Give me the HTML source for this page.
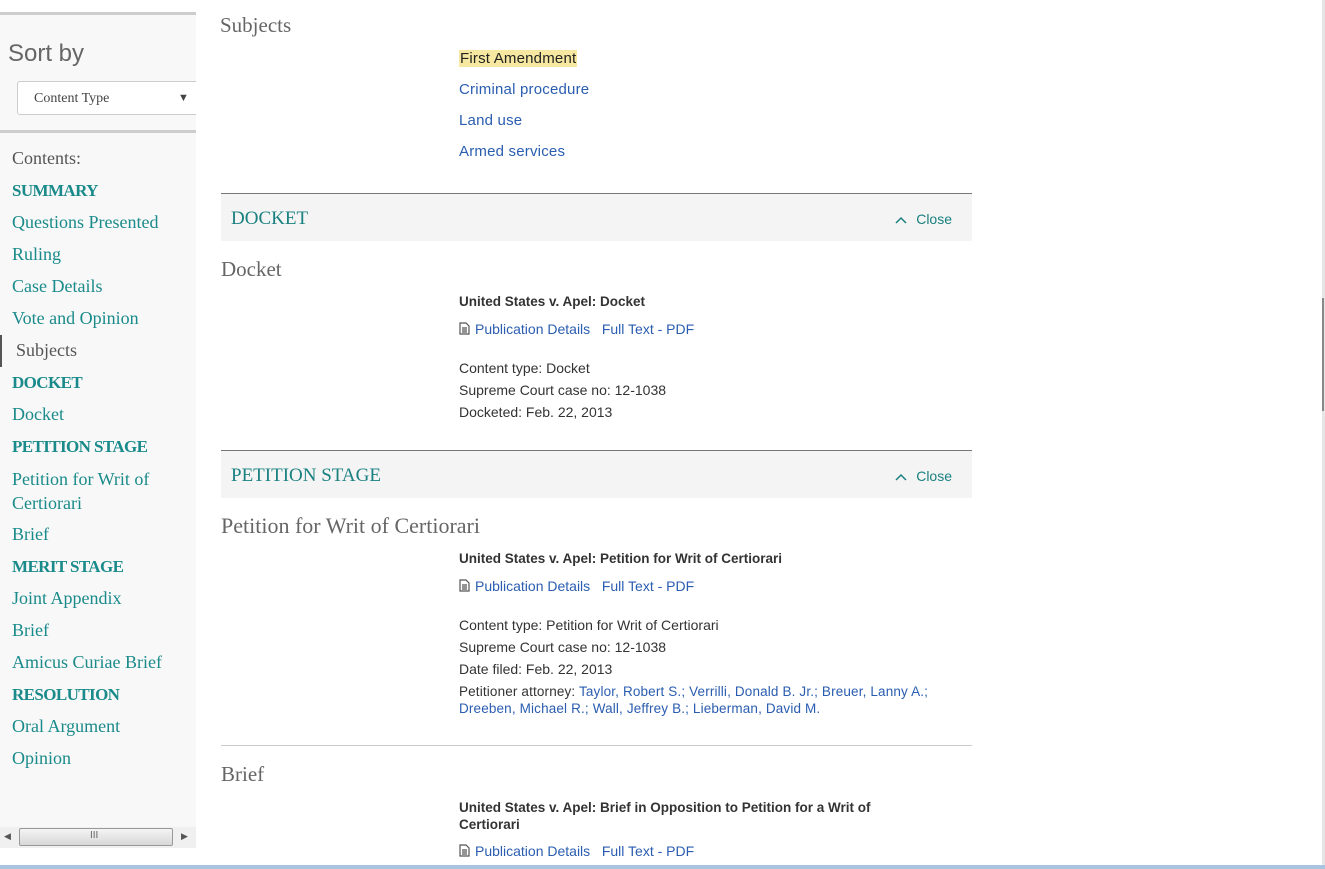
<!DOCTYPE html>
<html><head><meta charset="utf-8">
<style>
*{margin:0;padding:0;box-sizing:border-box}
body{width:1325px;height:869px;overflow:hidden;background:#fff;position:relative;font-family:"Liberation Sans",sans-serif}
.a{position:absolute;white-space:nowrap}
.serif{font-family:"Liberation Serif",serif}
#side{position:absolute;left:0;top:12px;width:196px;height:836px;background:#f8f8f8;border-top:3px solid #cdcdcd;overflow:hidden}
.nav{position:absolute;left:12px;font-family:"Liberation Serif",serif;font-size:18px;color:#1a8a8a}
.nav.b{font-weight:bold;letter-spacing:-0.6px;font-size:17px}
.h2{font-family:"Liberation Serif",serif;font-size:21px;color:#666}
.sec{position:absolute;left:221px;width:751px;height:48px;background:#f4f4f4;border-top:1px solid #777}
.sec .t{position:absolute;left:10px;top:14px;font-family:"Liberation Serif",serif;font-size:19px;color:#1a8080}
.sec .c{position:absolute;right:20px;top:17px;font-size:14px;color:#1a8080}
.link{color:#2a5db0;font-size:14px}
.sub{color:#2a5db0;font-size:15px;letter-spacing:0.2px}
.txt{font-size:14px;color:#333}
.bold{font-size:13.5px;font-weight:bold;color:#333}
</style></head><body>
<div id="side">
  <div class="a" style="left:8px;top:25px;font-size:24px;color:#666">Sort by</div>
  <div class="a" style="left:17px;top:66px;width:200px;height:34px;background:#fff;border:1px solid #ccc;border-radius:3px"></div>
  <div class="a serif" style="left:34px;top:76px;font-size:14px;color:#444">Content Type</div>
  <div class="a" style="left:178px;top:77px;font-size:11px;color:#444">▼</div>
  <div class="a" style="left:0;top:115px;width:196px;height:3px;background:#cdcdcd"></div>
  <div class="nav" style="top:133px;color:#555">Contents:</div>
  <div class="nav b" style="top:166px">SUMMARY</div>
  <div class="nav" style="top:197px">Questions Presented</div>
  <div class="nav" style="top:229px">Ruling</div>
  <div class="nav" style="top:261px">Case Details</div>
  <div class="nav" style="top:293px">Vote and Opinion</div>
  <div class="a" style="left:0;top:320px;width:2px;height:32px;background:#555"></div>
  <div class="nav" style="top:325px;left:16px;color:#555">Subjects</div>
  <div class="nav b" style="top:358px">DOCKET</div>
  <div class="nav" style="top:389px">Docket</div>
  <div class="nav b" style="top:422px">PETITION STAGE</div>
  <div class="nav" style="top:452px;line-height:24px;white-space:normal;width:170px">Petition for Writ of Certiorari</div>
  <div class="nav" style="top:509px">Brief</div>
  <div class="nav b" style="top:542px">MERIT STAGE</div>
  <div class="nav" style="top:573px">Joint Appendix</div>
  <div class="nav" style="top:605px">Brief</div>
  <div class="nav" style="top:637px">Amicus Curiae Brief</div>
  <div class="nav b" style="top:670px">RESOLUTION</div>
  <div class="nav" style="top:701px">Oral Argument</div>
  <div class="nav" style="top:733px">Opinion</div>
  <div class="a" style="left:0;top:812px;width:196px;height:21px;background:#f0f0f0"></div>
  <div class="a" style="left:4px;top:816px;font-size:9px;color:#555">◀</div>
  <div class="a" style="left:19px;top:813px;width:154px;height:18px;border:1px solid #999;border-radius:2px;background:linear-gradient(#f4f4f4,#d8d8d8)"></div>
  <div class="a" style="left:90px;top:815px;font-size:10px;color:#666">III</div>
  <div class="a" style="left:181px;top:816px;font-size:9px;color:#555">▶</div>
</div>

<div class="a h2" style="left:220px;top:13px">Subjects</div>
<div class="a sub" style="left:459px;top:50px;background:#f6e8a0;color:#222;padding:0 1px">First Amendment</div>
<div class="a sub" style="left:459px;top:81px">Criminal procedure</div>
<div class="a sub" style="left:459px;top:112px">Land use</div>
<div class="a sub" style="left:459px;top:143px">Armed services</div>

<div class="sec" style="top:193px"><div class="t">DOCKET</div><div class="c"><svg width="12" height="8" style="margin-right:9px"><path d="M1 7L6 2L11 7" stroke="#1a8080" stroke-width="1.5" fill="none"/></svg>Close</div></div>
<div class="a h2" style="left:221px;top:257px">Docket</div>
<div class="a bold" style="left:459px;top:294px">United States v. Apel: Docket</div>
<div class="a link" style="left:459px;top:321px"><svg width="11" height="13" style="vertical-align:-1px;margin-right:5px"><path d="M1 1H7L10 4V12H1Z M3 6H8M3 8H8M3 10H8" stroke="#555" stroke-width="1.2" fill="none"/></svg>Publication Details&nbsp;&nbsp;&nbsp;Full Text - PDF</div>
<div class="a txt" style="left:459px;top:360px">Content type: Docket</div>
<div class="a txt" style="left:459px;top:382px">Supreme Court case no: 12-1038</div>
<div class="a txt" style="left:459px;top:404px">Docketed: Feb. 22, 2013</div>

<div class="sec" style="top:450px"><div class="t">PETITION STAGE</div><div class="c"><svg width="12" height="8" style="margin-right:9px"><path d="M1 7L6 2L11 7" stroke="#1a8080" stroke-width="1.5" fill="none"/></svg>Close</div></div>
<div class="a h2" style="left:221px;top:513px;font-size:22px">Petition for Writ of Certiorari</div>
<div class="a bold" style="left:459px;top:551px">United States v. Apel: Petition for Writ of Certiorari</div>
<div class="a link" style="left:459px;top:578px"><svg width="11" height="13" style="vertical-align:-1px;margin-right:5px"><path d="M1 1H7L10 4V12H1Z M3 6H8M3 8H8M3 10H8" stroke="#555" stroke-width="1.2" fill="none"/></svg>Publication Details&nbsp;&nbsp;&nbsp;Full Text - PDF</div>
<div class="a txt" style="left:459px;top:617px">Content type: Petition for Writ of Certiorari</div>
<div class="a txt" style="left:459px;top:639px">Supreme Court case no: 12-1038</div>
<div class="a txt" style="left:459px;top:661px">Date filed: Feb. 22, 2013</div>
<div class="a" style="left:459px;top:683px;font-size:13.5px;line-height:17px;color:#333;letter-spacing:0.15px">Petitioner attorney: <span style="color:#2a5db0">Taylor, Robert S.; Verrilli, Donald B. Jr.; Breuer, Lanny A.;</span><br><span style="color:#2a5db0">Dreeben, Michael R.; Wall, Jeffrey B.; Lieberman, David M.</span></div>

<div class="a" style="left:221px;top:745px;width:751px;height:1px;background:#ccc"></div>
<div class="a h2" style="left:221px;top:762px">Brief</div>
<div class="a bold" style="left:459px;top:799px;line-height:17px">United States v. Apel: Brief in Opposition to Petition for a Writ of<br>Certiorari</div>
<div class="a link" style="left:459px;top:843px"><svg width="11" height="13" style="vertical-align:-1px;margin-right:5px"><path d="M1 1H7L10 4V12H1Z M3 6H8M3 8H8M3 10H8" stroke="#555" stroke-width="1.2" fill="none"/></svg>Publication Details&nbsp;&nbsp;&nbsp;Full Text - PDF</div>

<div class="a" style="left:1322px;top:0;width:3px;height:869px;background:#e6e6e6"></div>
<div class="a" style="left:1322px;top:298px;width:2px;height:113px;background:#888"></div>
<div class="a" style="left:0;top:865px;width:1325px;height:4px;background:#a8c4e0"></div>
</body></html>
